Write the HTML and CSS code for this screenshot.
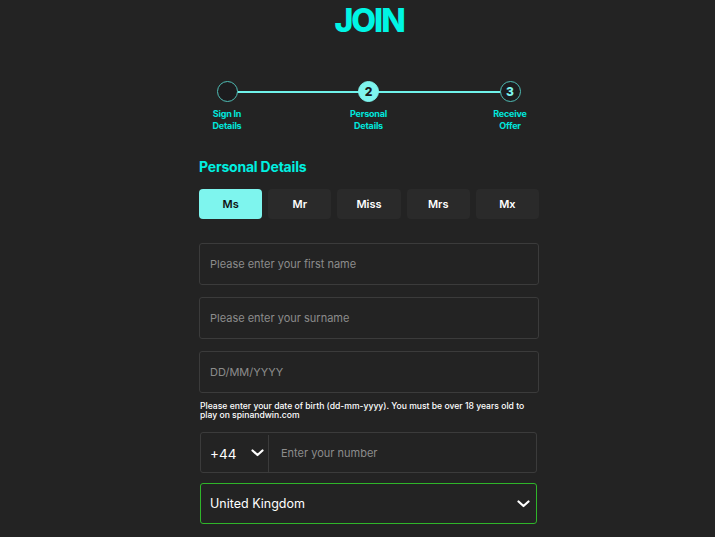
FILE: index.html
```html
<!DOCTYPE html>
<html lang="en">
<head>
<meta charset="utf-8">
<title>Join</title>
<link rel="stylesheet" href="styles.css">
</head>
<body>
<div class="page">
  <h1 class="title">JOIN</h1>
  <div class="form">
    <div class="stepper">
      <div class="step">
        <div class="dot"></div>
        <div class="step-label">Sign In<br>Details</div>
      </div>
      <div class="step">
        <div class="dot active">2</div>
        <div class="step-label">Personal<br>Details</div>
      </div>
      <div class="step">
        <div class="dot">3</div>
        <div class="step-label">Receive<br>Offer</div>
      </div>
    </div>

    <h2 class="section-title">Personal Details</h2>

    <div class="titles">
      <button class="title-btn selected">Ms</button>
      <button class="title-btn">Mr</button>
      <button class="title-btn">Miss</button>
      <button class="title-btn">Mrs</button>
      <button class="title-btn">Mx</button>
    </div>

    <div class="fields">
      <input class="field" type="text" placeholder="Please enter your first name">
      <input class="field" type="text" placeholder="Please enter your surname">
      <input class="field" type="text" placeholder="DD/MM/YYYY">
    </div>
    <p class="hint">Please enter your date of birth (dd-mm-yyyy). You must be over 18 years old to play on spinandwin.com</p>

    <div class="phone">
      <div class="code">
        <span>+44</span>
        <svg class="chev" width="13" height="8" viewBox="0 0 13 8"><polyline points="1.5,1.5 6.5,6 11.5,1.5" fill="none" stroke="#fff" stroke-width="2.2" stroke-linecap="round" stroke-linejoin="round"/></svg>
      </div>
      <input class="phone-input" type="text" placeholder="Enter your number">
    </div>

    <div class="country">
      <span>United Kingdom</span>
      <svg class="chev" width="13" height="8" viewBox="0 0 13 8"><polyline points="1.5,1.5 6.5,6 11.5,1.5" fill="none" stroke="#fff" stroke-width="2.2" stroke-linecap="round" stroke-linejoin="round"/></svg>
    </div>
  </div>
</div>
</body>
</html>
```

FILE: styles.css
```css
* { box-sizing: border-box; }

html, body {
  margin: 0;
  padding: 0;
  background: #232323;
  height: 100%;
  overflow: hidden;
}

body {
  font-family: Inter, "Liberation Sans", Arial, sans-serif;
  color: #fff;
}

.page {
  padding-left: 199px;
}

.title {
  width: 340px;
  margin: 0;
  padding-top: 1px;
  text-align: center;
  font-size: 32px;
  line-height: 40px;
  font-weight: 800;
  letter-spacing: -2px;
  color: #00f5e4;
}

.form {
  width: 340px;
}

.stepper {
  position: relative;
  display: flex;
  justify-content: space-between;
  margin-top: 40px;
}

.stepper::before {
  content: "";
  position: absolute;
  left: 28px;
  right: 29px;
  top: 10px;
  height: 1.5px;
  background: #6ff2ea;
}

.step {
  position: relative;
  width: 56px;
  display: flex;
  flex-direction: column;
  align-items: center;
}

.step:last-child {
  margin-right: 1px;
}

.dot {
  width: 21px;
  height: 21px;
  border-radius: 50%;
  border: 1.5px solid #4fbdb5;
  background: #1c1c1e;
  color: #7ff5ee;
  font-size: 12px;
  font-weight: 800;
  display: flex;
  align-items: center;
  justify-content: center;
  line-height: 1;
}

.dot.active {
  background: #7ef5ee;
  border-color: #7ef5ee;
  color: #1a1a1a;
}

.step-label {
  margin-top: 6px;
  text-align: center;
  font-size: 9px;
  line-height: 12px;
  font-weight: 700;
  color: #00e6dc;
  letter-spacing: -0.2px;
}

.section-title {
  margin: 26px 0 0;
  font-size: 14px;
  line-height: 18px;
  font-weight: 700;
  color: #00f0e0;
  letter-spacing: -0.2px;
}

.titles {
  display: flex;
  gap: 6px;
  margin-top: 13px;
}

.title-btn {
  flex: 1;
  height: 30px;
  border: none;
  border-radius: 4px;
  background: #2a2a2a;
  color: #fff;
  font-family: inherit;
  font-size: 11px;
  font-weight: 600;
  padding: 0;
}

.title-btn.selected {
  background: #7ef5ee;
  color: #111;
}

.fields {
  display: flex;
  flex-direction: column;
  gap: 12px;
  margin-top: 24px;
}

.field {
  display: block;
  width: 340px;
  height: 42px;
  border: 1px solid #3b3b3b;
  border-radius: 3px;
  background: #232323;
  padding: 0 10px;
  font-family: inherit;
  font-size: 11px;
  color: #fff;
  outline: none;
}

.field::placeholder,
.phone-input::placeholder {
  color: #8c8c8c;
}

.hint {
  margin: 9px 0 0 1px;
  font-size: 8.6px;
  line-height: 9px;
  font-weight: 500;
  color: #fff;
}

.phone {
  display: flex;
  width: 337px;
  height: 41px;
  margin: 12px 0 0 1px;
  border: 1px solid #3b3b3b;
  border-radius: 3px;
}

.code {
  width: 68px;
  display: flex;
  align-items: center;
  justify-content: space-between;
  padding: 0 4px 0 9px;
  border-right: 1px solid #3b3b3b;
  font-size: 13.5px;
  font-weight: 400;
  margin-top: 2px;
}

.code .chev {
  margin-top: -2px;
}

.phone-input {
  flex: 1;
  min-width: 0;
  border: none;
  background: transparent;
  padding: 0 12px;
  font-family: inherit;
  font-size: 11px;
  color: #fff;
  outline: none;
}

.country {
  display: flex;
  align-items: center;
  justify-content: space-between;
  width: 337px;
  height: 41px;
  margin: 10px 0 0 1px;
  border: 1px solid #2fb52a;
  border-radius: 3px;
  padding: 0 6px 0 9px;
  font-size: 12.5px;
  font-weight: 400;
}
```
